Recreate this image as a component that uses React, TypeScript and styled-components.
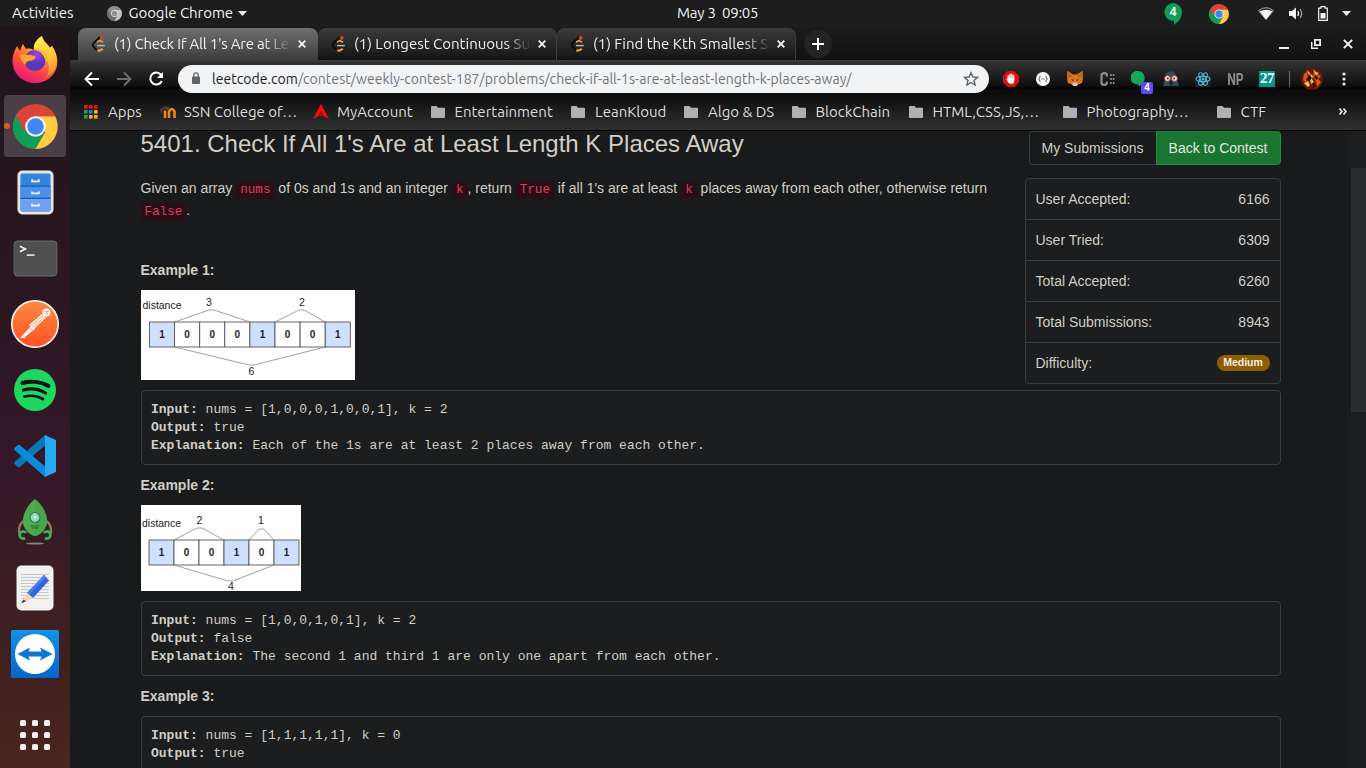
import React from 'react';
import styled, { createGlobalStyle } from 'styled-components';

const ui = `'Ubuntu', 'Noto Sans', sans-serif`;

const GlobalStyle = createGlobalStyle`
  *, *::before, *::after { box-sizing: border-box; }
  html, body { margin: 0; padding: 0; background: #181a1b; overflow: hidden; }
  svg { display: block; flex: none; }
`;

const Desktop = styled.div`
  width: 1366px;
  height: 768px;
  display: flex;
  flex-direction: column;
  overflow: hidden;
  background: #181a1b;
`;

/* ---------- system bar ---------- */

const SystemBar = styled.header`
  flex: none;
  height: 27px;
  display: grid;
  grid-template-columns: 677px auto 1fr;
  align-items: center;
  background: #1d1d1d;
  color: #f2f2f2;
  font: 15px/26px ${ui};
`;

const BarGroup = styled.div<{ $end?: boolean }>`
  display: flex;
  align-items: center;
  justify-content: ${p => (p.$end ? 'flex-end' : 'flex-start')};
  padding: ${p => (p.$end ? '0 10px 0 0' : '0 0 0 12px')};
`;

const BarText = styled.span<{ $track?: number; $before?: number; $gap?: number }>`
  height: 27px;
  letter-spacing: ${p => p.$track ?? 0}px;
  margin-left: ${p => p.$before ?? 0}px;
  margin-right: ${p => p.$gap ?? 0}px;
  white-space: pre;
`;

const StatusSlot = styled.div<{ $w: number }>`
  width: ${p => p.$w}px;
  height: 26px;
  display: flex;
  align-items: center;
  justify-content: center;
`;

/* ---------- dock ---------- */

const Workspace = styled.div`
  flex: 1;
  min-height: 0;
  display: flex;
`;

const Dock = styled.nav`
  flex: none;
  width: 70px;
  display: flex;
  flex-direction: column;
  background: linear-gradient(#20141b 0%, #2b1722 35%, #351829 60%, #40201f 86%, #4a251f 100%);
`;

const DockItem = styled.div<{ $last?: boolean }>`
  position: relative;
  height: 66px;
  display: flex;
  align-items: center;
  justify-content: center;
  ${p => (p.$last ? 'margin-top: auto;' : '')}
  &:first-child { padding-bottom: 2px; }
`;

const ActiveTile = styled.div`
  width: 62px;
  height: 62px;
  border-radius: 4px;
  background: #4b3f46;
  display: flex;
  align-items: center;
  justify-content: center;
`;

const RunningDot = styled.i`
  position: absolute;
  left: 4px;
  top: 30px;
  width: 6px;
  height: 6px;
  border-radius: 50%;
  background: #e95420;
`;

/* ---------- browser chrome ---------- */

const Browser = styled.div`
  flex: 1;
  min-width: 0;
  display: flex;
  flex-direction: column;
`;

const TabStrip = styled.div`
  flex: none;
  height: 33px;
  padding: 1px 0 0 8px;
  display: flex;
  background: linear-gradient(#1b1b1b, #121212);
`;

const Tab = styled.div<{ $active?: boolean }>`
  width: ${p => (p.$active ? 240 : 239)}px;
  height: 32px;
  padding: 0 7px 0 13px;
  display: flex;
  align-items: center;
  border-radius: 8px 8px 0 ${p => (p.$active ? 0 : 8)}px;
  background: ${p => (p.$active ? 'linear-gradient(#6f6f6f, #3c3c3c)' : 'linear-gradient(#3b3b3b, #141414)')};
  border-right: 1px solid ${p => (p.$active ? 'transparent' : '#3d3d3d')};
  color: #f0f0f0;
  font: 15px/32px ${ui};
`;

const TabTitle = styled.span<{ $track: number }>`
  flex: none;
  width: 178px;
  margin-left: 7px;
  white-space: nowrap;
  letter-spacing: ${p => p.$track}px;
  mask-image: linear-gradient(90deg, #000 84%, transparent 100%);
`;

const TabClose = styled.span`
  width: 16px;
  margin-left: 2px;
  display: flex;
  justify-content: center;
`;

const NewTab = styled.div`
  width: 28px;
  height: 28px;
  margin: 2px 0 0 8px;
  border-radius: 50%;
  background: #242424;
  display: flex;
  align-items: center;
  justify-content: center;
`;

const WindowControls = styled.div`
  height: 32px;
  margin-left: auto;
  padding-right: 2px;
  display: flex;
  align-items: center;
`;

const Toolbar = styled.div`
  flex: none;
  height: 37px;
  padding-left: 6px;
  display: flex;
  align-items: center;
  background: linear-gradient(#3d3d3d 0, #303030 3px, #0d0d0d 27px, #000 28px, #0b0b0b 29px, #0f0f0f 37px);
`;

const Slot = styled.div<{ $w?: number }>`
  position: relative;
  flex: none;
  width: ${p => p.$w ?? 32}px;
  height: 28px;
  display: flex;
  align-items: center;
  justify-content: center;
`;

const AddressBar = styled.div`
  width: 811px;
  height: 28px;
  margin: 0 6px;
  padding: 0 10px 0 12px;
  border-radius: 14px;
  display: flex;
  align-items: center;
  background: #f1f3f4;
  color: #70757a;
  font: 14px/28px ${ui};
`;

const Url = styled.span`
  flex: 1;
  margin-left: 10px;
  white-space: nowrap;
  letter-spacing: 0.05px;
  b { font-weight: 400; color: #202124; }
`;

const ExtensionBadge = styled.b`
  position: absolute;
  right: 2px;
  bottom: -1px;
  width: 12px;
  height: 12px;
  border-radius: 2px;
  background: #5a4cf0;
  color: #fff;
  font: bold 10px/12px ${ui};
  text-align: center;
`;

const ExtensionLetters = styled.b`
  color: #8b8b8b;
  font: bold 17px/28px Roboto, sans-serif;
  transform: scaleX(0.72);
`;

const DateBadge = styled.b`
  width: 16px;
  height: 16px;
  background: #009688;
  color: #fff;
  font: bold 15px/14px 'Liberation Serif', serif;
  letter-spacing: -0.5px;
  text-align: center;
`;

const Divider = styled.i`
  width: 1px;
  height: 16px;
  background: #6b6b6b;
`;

const BookmarksBar = styled.div`
  flex: none;
  height: 34px;
  padding: 0 0 4px 14px;
  display: flex;
  align-items: center;
  background: linear-gradient(#0f0f0f, #303030);
  border-bottom: 1px solid #000;
  color: #dcdcdc;
  font: 15px/28px ${ui};
`;

const Bookmark = styled.div<{ $w: number }>`
  flex: none;
  width: ${p => p.$w}px;
  display: flex;
  align-items: center;
  white-space: nowrap;
  > span { width: 24px; flex: none; }
`;

/* ---------- page ---------- */

const Viewport = styled.main`
  flex: 1;
  min-height: 0;
  display: flex;
  overflow: hidden;
  background: #181a1b;
`;

const Article = styled.div`
  flex: 1;
  padding-left: 70.5px;
  color: #d2cec6;
  font: 14px/22px 'Liberation Sans', Arial, sans-serif;
`;

const Column = styled.div`
  width: 1140px;
`;

const ScrollTrack = styled.div`
  width: 15px;
  padding-top: 37px;
  background: #1c1e1f;
`;

const ScrollThumb = styled.div`
  height: 244px;
  background: #2a2c2e;
`;

const Sidebar = styled.aside`
  float: right;
  width: 256px;
  margin-left: 20px;
`;

const ButtonGroup = styled.div`
  display: flex;
  justify-content: flex-end;
  margin-bottom: 13px;
`;

const PageButton = styled.button<{ $primary?: boolean }>`
  height: 34px;
  width: ${p => (p.$primary ? 125 : 127)}px;
  padding: 0;
  border: 1px solid ${p => (p.$primary ? '#1c8f36' : '#3c4042')};
  ${p => (p.$primary ? '' : 'border-right: 0;')}
  border-radius: ${p => (p.$primary ? '0 4px 4px 0' : '4px 0 0 4px')};
  background: ${p => (p.$primary ? '#197530' : '#181a1b')};
  color: ${p => (p.$primary ? '#e8e6e3' : '#d2cec6')};
  font: 14px/20px 'Liberation Sans', Arial, sans-serif;
`;

const StatList = styled.dl`
  margin: 0;
  border: 1px solid #3a3d3f;
  border-radius: 4px;
  background: #1b1d1e;
`;

const StatRow = styled.div`
  height: 41px;
  padding: 0 10px;
  display: flex;
  align-items: center;
  justify-content: space-between;
  & + & { border-top: 1px solid #3a3d3f; }
  &:first-child { height: 40px; }
  dd { margin: 0; }
`;

const Pill = styled.span`
  display: block;
  width: 53px;
  height: 16px;
  border-radius: 8px;
  background: #8f5e00;
  color: #f1efec;
  font: bold 10.5px/15px 'Liberation Sans', Arial, sans-serif;
  text-align: center;
`;

const Title = styled.h3`
  margin: 0 0 20px;
  font-size: 24px;
  line-height: 26px;
  font-weight: 400;
`;

const Paragraph = styled.p<{ $after: number }>`
  margin: 0 0 ${p => p.$after}px;
`;

const Code = styled.code`
  padding: 2px 4px;
  border-radius: 4px;
  background: #2b0e15;
  color: #dc3f66;
  font: 12.6px 'Liberation Mono', monospace;
`;

const Sample = styled.pre`
  clear: both;
  height: 75px;
  margin: 0 0 9px;
  padding: 9.5px;
  border: 1px solid #3a3d3f;
  border-radius: 4px;
  background: #1b1d1e;
  font: 13px/18px 'Liberation Mono', monospace;
`;

const Figure = styled.div<{ $after: number }>`
  margin-bottom: ${p => p.$after}px;
`;

/* ---------- icons ---------- */

const ChromeLogo = ({ size, gray }: { size: number; gray?: boolean }) => {
  const [r, g, y, b, w] = gray
    ? ['#8c8c8c', '#6d6d6d', '#c4c4c4', '#8f8f8f', '#e6e6e6']
    : ['#db4437', '#0f9d58', '#ffcd40', '#4285f4', '#f1f1f1'];
  return (
    <svg width={size} height={size} viewBox="0 0 48 48">
      <circle cx="24" cy="24" r="24" fill={r} />
      <path d="M3.2 12 A24 24 0 0 0 24 48 L34.4 29 L24 24 L13.6 30Z" fill={g} />
      <path d="M44.8 13 H24 L34.4 30 L24 48 A24 24 0 0 0 44.8 13Z" fill={y} />
      <path d="M3.2 12 A24 24 0 0 1 44.8 13 H24 L13.6 30Z" fill={r} />
      <circle cx="24" cy="24" r="11" fill={w} />
      <circle cx="24" cy="24" r="8.8" fill={b} />
    </svg>
  );
};

const Firefox = () => (
  <svg width="46" height="47" viewBox="0 0 46 47">
    <defs>
      <linearGradient id="ffBody" x1="0.8" y1="0" x2="0.3" y2="1">
        <stop offset="0" stopColor="#fff44f" />
        <stop offset="0.35" stopColor="#ffa22b" />
        <stop offset="0.65" stopColor="#ff4a40" />
        <stop offset="1" stopColor="#e5127d" />
      </linearGradient>
      <linearGradient id="ffTail" x1="0.3" y1="0" x2="0.6" y2="1">
        <stop offset="0" stopColor="#fff04a" />
        <stop offset="0.6" stopColor="#ffc533" />
        <stop offset="1" stopColor="#ff8a35" />
      </linearGradient>
      <radialGradient id="ffGlobe" cx="0.6" cy="0.2">
        <stop offset="0" stopColor="#a045e0" />
        <stop offset="1" stopColor="#5438b8" />
      </radialGradient>
    </defs>
    <path d="M23 47C10 47 0.5 37 0.5 25C0.5 18 4 12 5 10L8 15C9 12 10 9 11 8L14 13C17 12 20 13 22 14C21 8 25 3 30 0C31 6 36 8 38 12L40 10C45 17 46 24 45 30C43 40 34 47 23 47Z" fill="url(#ffBody)" />
    <path d="M22 14C21 8 25 3 30 0C31 6 36 8 38 12L40 10C46 19 47 33 35 41C38 34 37 22 32 19C29 16 24 16 22 14Z" fill="url(#ffTail)" />
    <circle cx="23" cy="24.5" r="10.5" fill="url(#ffGlobe)" />
    <path d="M7 18C11 19 18 18 23 20C25 22 21 25 17 25C15 25 14 27 13 29C10 26 8 22 7 18Z" fill="#ffa12a" />
    <path d="M22 14C28 14 32 19 34 26L37 24C36 18 32 14 22 12Z" fill="#ffbb2e" />
  </svg>
);

const Files = () => (
  <svg width="37" height="45" viewBox="0 0 38 46">
    <rect x="0.5" y="0.5" width="37" height="45" rx="5" fill="#ece5dc" />
    <rect x="3.5" y="3.5" width="31" height="39" rx="2" fill="#3584dc" />
    <rect x="3.5" y="16.5" width="31" height="12" fill="#4b91e8" />
    <rect x="3.5" y="29.5" width="31" height="13" rx="2" fill="#6fa1f2" />
    <path d="M3.5 16.5H34.5M3.5 29H34.5" stroke="#1e5bb0" strokeWidth="1.2" />
    <path d="M15.5 9.5v2h7v-2M15.5 22v2h7v-2M15.5 34.5v2h7v-2" stroke="#f3efe8" strokeWidth="1.8" fill="none" />
  </svg>
);

const Terminal = () => (
  <svg width="45" height="37" viewBox="0 0 46 38">
    <rect x="1" y="1" width="44" height="36" rx="3.5" fill="#505050" stroke="#6a6a6a" />
    <path d="M7 6.5L12.500 9.200L7 12" stroke="#eee" strokeWidth="1.8" fill="none" />
    <path d="M14 15.500H22" stroke="#eee" strokeWidth="1.6" />
  </svg>
);

const Postman = () => (
  <svg width="48" height="48" viewBox="0 0 48 48">
    <defs>
      <linearGradient id="pm" x1="0" y1="0" x2="0" y2="1">
        <stop offset="0" stopColor="#ff8a3d" />
        <stop offset="1" stopColor="#ff5226" />
      </linearGradient>
    </defs>
    <circle cx="24" cy="24" r="23.2" fill="url(#pm)" stroke="#fff" strokeWidth="1.6" />
    <circle cx="35.5" cy="12.5" r="4" fill="#fff" />
    <path d="M31 14L18 25L23 29L35 17.500ZM20 26L11 36L12.500 38L24 29Z" fill="#fff" />
    <path d="M19.500 26L32 15.500M21.500 27.500L33.500 17M17 27L22 30.500" stroke="#ff7238" strokeWidth="0.8" />
    <path d="M33.500 12L38 11M35 12L37 15" stroke="#ff7238" strokeWidth="0.8" />
    <path d="M14 35L10.500 37.500H14" stroke="#fff" strokeWidth="1.2" fill="none" />
  </svg>
);

const Spotify = () => (
  <svg width="42" height="42" viewBox="0 0 42 42">
    <circle cx="21" cy="21" r="21" fill="#1ed760" />
    <g stroke="#191414" fill="none" strokeLinecap="round">
      <path d="M8.500 14C16 11.500 27 12.500 34.500 17" strokeWidth="4" />
      <path d="M9.500 21C17 19 25 20 31.500 24" strokeWidth="3.2" />
      <path d="M10.500 27.500C17 26 23 26.500 29 30" strokeWidth="2.7" />
    </g>
  </svg>
);

const VSCode = () => (
  <svg width="42" height="42" viewBox="0 0 42 42">
    <path d="M31 0L0.500 27Q0 28 0.500 29L3.500 31.800Q5 32.500 6 31.800L31 10.500Z" fill="#0878ba" />
    <path d="M31 42L0.500 15Q0 14 0.500 13L3.500 10.200Q5 9.500 6 10.200L31 31.500Z" fill="#0a8ad8" />
    <path d="M31 0L42 5V37L31 42Z" fill="#25a8f2" />
  </svg>
);

const Rocket = () => (
  <svg width="36" height="46" viewBox="0 0 36 46">
    <ellipse cx="18" cy="44.5" rx="9" ry="1" fill="#8a7c84" />
    <path d="M6 22C2 26 1 32 3 35M30 22C34 26 35 32 33 35" stroke="#8f7d5c" strokeWidth="2.4" fill="none" />
    <path d="M18 0C11 5 5 16 6 24C7 31 14 37 18 37C22 37 29 31 30 24C31 16 25 5 18 0Z" fill="#4dac50" />
    <path d="M18 0V37C22 37 29 31 30 24C31 16 25 5 18 0Z" fill="#3f9746" opacity="0.35" />
    <circle cx="18" cy="18.5" r="5.5" fill="#277f58" />
    <circle cx="18" cy="18.5" r="4.4" fill="#8ed9bb" />
    <circle cx="18" cy="18" r="1.5" fill="#e6fff6" />
    <path d="M14 27h8M15 29h6" stroke="#276b34" strokeWidth="1.4" strokeDasharray="1.500 0.700" />
    <path d="M9 34A3.500 3.500 0 1 0 8 39M27 34A3.500 3.500 0 1 1 28 39" stroke="#36b35b" strokeWidth="2.8" fill="none" />
  </svg>
);

const Editor = () => (
  <svg width="38" height="46" viewBox="0 0 38 46">
    <rect x="0.5" y="0.5" width="37" height="45" rx="5" fill="#f1f1f1" />
    <path d="M5 9.5h28M5 12.5h28M5 15.5h28M5 18.5h28M5 21.5h28M5 24.5h28M5 27.5h28M5 30.5h28M5 33.5h28" stroke="#c9c9c9" />
    <path d="M28 10L33 15.500L17 33L11 28Z" fill="#3264dc" />
    <path d="M28 10L30 12.200L13 29.700L11 28Z" fill="#4d83f0" />
    <path d="M11 28L17 33L6 38Z" fill="#f6d5b5" />
    <path d="M7.500 34.500L10 36.200L5 38.500Z" fill="#3b3b3b" />
  </svg>
);

const TeamViewer = () => (
  <svg width="48" height="48" viewBox="0 0 48 48">
    <defs>
      <linearGradient id="tv" x1="0" y1="0" x2="0" y2="1">
        <stop offset="0" stopColor="#1292e8" />
        <stop offset="1" stopColor="#0565cc" />
      </linearGradient>
    </defs>
    <rect width="48" height="48" rx="2" fill="url(#tv)" />
    <circle cx="24" cy="24" r="20" fill="#fff" />
    <path d="M6.500 24L19 17.500L17.500 21.500H30.500L29 17.500L41.500 24L29 30.500L30.500 26.500H17.500L19 30.500Z" fill="#0e75d3" />
  </svg>
);

const AppsGrid = () => (
  <svg width="30" height="30" viewBox="0 0 30 30" fill="#f2f0ee">
    {[0, 12, 24].map(y => [0, 12, 24].map(x => <rect key={`${x}-${y}`} x={x} y={y} width="6" height="6" rx="1.5" />))}
  </svg>
);

const LeetFavicon = () => (
  <svg width="16" height="16" viewBox="0 0 16 16" fill="none">
    <path d="M5.800 6.200Q9 3.500 12 6.300" stroke="#f0a514" strokeWidth="1.8" />
    <path d="M5 13.500Q8.500 16 11.800 12.800" stroke="#f0a514" strokeWidth="2" />
    <path d="M9 1L2.200 7.500Q1.200 9 2.200 10.500L6 14.500" stroke="#0b0b0b" strokeWidth="1.9" />
    <path d="M6 9.600H13.800" stroke="#b5b5b5" strokeWidth="1.5" />
    <circle cx="10.700" cy="2" r="1.9" fill="#d4403a" />
  </svg>
);

const Cross = ({ size = 8, w = 1.8 }: { size?: number; w?: number }) => (
  <svg width={size} height={size} viewBox="0 0 8 8">
    <path d="M0.700 0.700L7.300 7.300M7.300 0.700L0.700 7.300" stroke="#f2f2f2" strokeWidth={w} />
  </svg>
);

const Arrow = ({ forward }: { forward?: boolean }) => (
  <svg width="16" height="16" viewBox="0 0 16 16" fill="none" stroke={forward ? '#6f6f6f' : '#fff'} strokeWidth="1.9">
    <path d={forward ? 'M1 8H14M8 1.500L14.500 8L8 14.500' : 'M15 8H2M8 1.500L1.500 8L8 14.500'} />
  </svg>
);

const Folder = () => (
  <svg width="14" height="12" viewBox="0 0 14 12">
    <path d="M1 0H5.500L7 1.800H13Q14 1.800 14 2.800V11Q14 12 13 12H1Q0 12 0 11V1Q0 0 1 0Z" fill="#aeb0b3" />
  </svg>
);

const AppsMark = () => {
  const colors = ['#f01414', '#f01414', '#f01414', '#21a453', '#3273e8', '#f2b212', '#21a453', '#f2b212', '#f2b212'];
  return (
    <svg width="14" height="14" viewBox="0 0 14 14">
      {colors.map((c, i) => (
        <rect key={i} x={(i % 3) * 5} y={Math.floor(i / 3) * 5} width="3.6" height="3.6" fill={c} />
      ))}
    </svg>
  );
};

const Moodle = () => (
  <svg width="17" height="12" viewBox="0 0 17 12">
    <path d="M5 12V4.500M9 12V5.500Q12 0.500 14.500 5.500V12" stroke="#f08a0c" strokeWidth="2.6" fill="none" />
    <path d="M0 3L5 0.500L10 1L8 4Q4 2.500 2 4.500L1.500 8H0.800Z" fill="#4d4035" />
  </svg>
);

const RedMark = () => (
  <svg width="16" height="15" viewBox="0 0 16 15">
    <path d="M8 0L16 15L10.500 12.200L8 7L5.500 12.200L0 15Z" fill="#fa0a0a" />
    <path d="M6.500 9.500H9.500V12H6.500Z" fill="#d00" />
  </svg>
);

interface DiagramProps {
  width: number;
  height: number;
  cells: number[];
  top: number;
  x0: number;
  step: number;
  label: [number, number];
  arcs: { from: number; to: number; tip: [number, number]; text: string; tx: number; ty: number; below?: boolean }[];
}

const Diagram = ({ width, height, cells, top, x0, step, label, arcs }: DiagramProps) => (
  <svg width={width} height={height} viewBox={`0 0 ${width} ${height}`} fontFamily="Liberation Sans, Arial, sans-serif" fontSize="10.5" fill="#222">
    <rect width={width} height={height} fill="#fff" />
    <text x={label[0]} y={label[1]} textLength="39">distance</text>
    {cells.map((v, i) => (
      <g key={i}>
        <rect x={x0 + i * step} y={top} width={step} height="25" fill={v ? '#cfdfff' : '#fff'} stroke="#555" strokeWidth="0.9" />
        <text x={x0 + (i + 0.5) * step} y={top + 16} textAnchor="middle" fontWeight="bold" fontSize="10">{v}</text>
      </g>
    ))}
    {arcs.map((a, i) => {
      const y = a.below ? top + 25 : top;
      return (
        <g key={i}>
          <path d={`M${x0 + a.from * step} ${y}L${a.tip[0] - 3} ${a.tip[1]}H${a.tip[0] + 2}L${x0 + a.to * step} ${y}`} fill="none" stroke="#888" strokeWidth="0.8" strokeLinejoin="round" />
          <text x={a.tx} y={a.ty} textAnchor="middle">{a.text}</text>
        </g>
      );
    })}
  </svg>
);

/* ---------- data ---------- */

const tabs = [
  { title: "(1) Check If All 1's Are at Le", active: true, track: -0.22 },
  { title: '(1) Longest Continuous Su', track: 0 },
  { title: '(1) Find the Kth Smallest S', track: 0 },
];

const bookmarks = [
  { text: 'Apps', w: 76, icon: <AppsMark /> },
  { text: 'SSN College of…', w: 153, icon: <Moodle /> },
  { text: 'MyAccount', w: 117.5, icon: <RedMark /> },
  { text: 'Entertainment', w: 140.5, icon: <Folder /> },
  { text: 'LeanKloud', w: 113, icon: <Folder /> },
  { text: 'Algo & DS', w: 107.5, icon: <Folder /> },
  { text: 'BlockChain', w: 117, icon: <Folder /> },
  { text: 'HTML,CSS,JS,…', w: 154, icon: <Folder /> },
  { text: 'Photography…', w: 154, icon: <Folder /> },
  { text: 'CTF', w: 101, icon: <Folder /> },
];

const stats = [
  ['User Accepted:', '6166'],
  ['User Tried:', '6309'],
  ['Total Accepted:', '6260'],
  ['Total Submissions:', '8943'],
];

const dock = [Files, Terminal, Postman, Spotify, VSCode, Rocket, Editor, TeamViewer];

export default function App() {
  return (
    <Desktop>
      <GlobalStyle />
      <SystemBar>
        <BarGroup>
          <BarText $gap={33}>Activities</BarText>
          <ChromeLogo size={15} gray />
          <BarText $before={7} $gap={5} $track={-0.05}>Google Chrome</BarText>
          <svg width="9" height="5" viewBox="0 0 9 5"><path d="M0 0H9L4.500 5Z" fill="#f2f2f2" /></svg>
        </BarGroup>
        <BarText $track={-0.25}>May 3  09:05</BarText>
        <BarGroup $end>
          <StatusSlot $w={30}>
            <svg width="18" height="22" viewBox="0 0 18 22">
              <path d="M9 0A9 9 0 0 1 18 9C18 15 14 19 10 22V18A9 9 0 1 1 9 0Z" fill="#109d58" />
              <text x="9" y="13" textAnchor="middle" fill="#fff" fontFamily="Liberation Sans, sans-serif" fontWeight="bold" fontSize="12">4</text>
            </svg>
          </StatusSlot>
          <StatusSlot $w={62}><ChromeLogo size={20} /></StatusSlot>
          <StatusSlot $w={32}>
            <svg width="16" height="13" viewBox="0 0 16 13">
              <path d="M0.500 3.500Q8 -2 15.500 3.500L8 12.500Z" fill="none" stroke="#aaa" />
              <path d="M1.500 4.300Q8 1 14.500 4.300L8 12.500Z" fill="#f2f2f2" />
            </svg>
          </StatusSlot>
          <StatusSlot $w={28}>
            <svg width="15" height="13" viewBox="0 0 15 13" fill="none" stroke="#f2f2f2" strokeWidth="1.2">
              <path d="M0 4H3L7 0.500V12.500L3 9H0Z" fill="#f2f2f2" stroke="none" />
              <path d="M8.800 4Q10.500 6.500 8.800 9" />
              <path d="M11 2Q14.500 6.500 11 11" stroke="#aaa" />
            </svg>
          </StatusSlot>
          <StatusSlot $w={26}>
            <svg width="10" height="15" viewBox="0 0 10 15">
              <path d="M0.700 2.200H3V0.700H7V2.200H9.300V14.300H0.700Z" fill="none" stroke="#f2f2f2" strokeWidth="1.2" />
              <path d="M2.500 7H7.500V12.500H2.500Z" fill="#f2f2f2" />
            </svg>
          </StatusSlot>
          <StatusSlot $w={20}>
            <svg width="9" height="5" viewBox="0 0 9 5"><path d="M0 0H9L4.500 5Z" fill="#f2f2f2" /></svg>
          </StatusSlot>
        </BarGroup>
      </SystemBar>

      <Workspace>
        <Dock>
          <DockItem><Firefox /></DockItem>
          <DockItem>
            <RunningDot />
            <ActiveTile><ChromeLogo size={45} /></ActiveTile>
          </DockItem>
          {dock.map((Icon, i) => <DockItem key={i}><Icon /></DockItem>)}
          <DockItem $last><AppsGrid /></DockItem>
        </Dock>

        <Browser>
          <TabStrip>
            {tabs.map(t => (
              <Tab key={t.title} $active={t.active}>
                <LeetFavicon />
                <TabTitle $track={t.track}>{t.title}</TabTitle>
                <TabClose><Cross /></TabClose>
              </Tab>
            ))}
            <NewTab>
              <svg width="12" height="12" viewBox="0 0 12 12"><path d="M6 0V12M0 6H12" stroke="#fff" strokeWidth="2" /></svg>
            </NewTab>
            <WindowControls>
              <Slot><svg width="10" height="10"><path d="M0 9H10" stroke="#eee" strokeWidth="2" /></svg></Slot>
              <Slot>
                <svg width="10" height="10" viewBox="0 0 10 10" fill="none" stroke="#eee">
                  <path d="M3.900 0.900H9.100V6.100H3.900Z" strokeWidth="1.8" />
                  <path d="M0.700 3V9.300H7" strokeWidth="1.5" />
                </svg>
              </Slot>
              <Slot><Cross size={10} w={1.6} /></Slot>
            </WindowControls>
          </TabStrip>

          <Toolbar>
            <Slot><Arrow /></Slot>
            <Slot><Arrow forward /></Slot>
            <Slot>
              <svg width="16" height="16" viewBox="0 0 16 16">
                <path d="M13 3.800A6 6 0 1 0 13.800 10" fill="none" stroke="#fff" strokeWidth="2" />
                <path d="M15 1V7H9Z" fill="#fff" />
              </svg>
            </Slot>
            <AddressBar>
              <svg width="12" height="13" viewBox="0 0 12 13">
                <rect x="2" y="4.5" width="8" height="7.5" rx="1" fill="#5f6368" />
                <path d="M3.700 5V3.200a2.300 2.300 0 0 1 4.600 0V5" fill="none" stroke="#5f6368" strokeWidth="1.3" />
              </svg>
              <Url><b>leetcode.com</b>/contest/weekly-contest-187/problems/check-if-all-1s-are-at-least-length-k-places-away/</Url>
              <svg width="16" height="16" viewBox="0 0 16 16">
                <path d="M8 1.700L9.900 6L14.500 6.400L11 9.400L12.100 14L8 11.500L3.900 14L5 9.400L1.500 6.400L6.100 6Z" fill="none" stroke="#5f6368" strokeWidth="1.4" />
              </svg>
            </AddressBar>
            <Slot>
              <svg width="16" height="16" viewBox="0 0 16 16">
                <path d="M4.700 0H11.300L16 4.700V11.300L11.300 16H4.700L0 11.300V4.700Z" fill="#e40d0d" />
                <path d="M5.200 8V5M7 8V3.500M8.800 8V3.200M10.600 8V4.500" stroke="#fff" strokeWidth="1.4" strokeLinecap="round" />
                <path d="M4.500 7H11.300V10Q11 13 8.500 13Q6 13 4.500 10.500L3.500 8.500Z" fill="#fff" />
              </svg>
            </Slot>
            <Slot>
              <svg width="14" height="14" viewBox="0 0 14 14">
                <circle cx="7" cy="7" r="7" fill="#fff" />
                <path d="M4.500 4Q3.500 4 3.600 5.800L2.700 7L3.600 8.200Q3.500 10 4.500 10M9.500 4Q10.500 4 10.400 5.800L11.300 7L10.400 8.200Q10.500 10 9.500 10" stroke="#333" strokeWidth="0.9" fill="none" />
                <path d="M5.300 7H8.700" stroke="#333" strokeDasharray="0.900 0.500" />
              </svg>
            </Slot>
            <Slot>
              <svg width="16" height="15" viewBox="0 0 16 15">
                <path d="M0.500 0L6 3.500H10L15.500 0L16 7L15 12L11 13.500L9.500 15H6.500L5 13.500L1 12L0 7Z" fill="#e2761b" />
                <path d="M0.500 0L6 3.500L4 7L0 7ZM15.500 0L10 3.500L12 7H16Z" fill="#c4691a" />
                <path d="M5 13.500L6.500 11.500H9.500L11 13.500L9.500 15H6.500Z" fill="#d7c1b3" />
                <path d="M4.500 8.500L6.500 9.500M11.500 8.500L9.500 9.500" stroke="#233447" strokeWidth="1.3" />
              </svg>
            </Slot>
            <Slot>
              <svg width="15" height="14" viewBox="0 0 15 14">
                <path d="M6.800 4.500V3Q6.800 1.100 4.200 1.100Q1.500 1.100 1.500 3.500V10.500Q1.500 12.900 4.200 12.900Q6.800 12.900 6.800 11V9.500" fill="none" stroke="#8f8f8f" strokeWidth="2.2" />
                <path d="M10.200 3h1.600M12.800 3h1.600M10.200 7h1.600M12.800 7h1.600M10.200 11h1.600M12.800 11h1.600" stroke="#8f8f8f" strokeWidth="2.2" />
              </svg>
            </Slot>
            <Slot>
              <svg width="16" height="16" viewBox="0 0 16 16"><path d="M7 0a6.700 6.700 0 0 1 6.700 6.700C13.700 11 10 14 7.700 15.500V13.200A6.700 6.700 0 1 1 7 0Z" fill="#12a85c" /></svg>
              <ExtensionBadge>4</ExtensionBadge>
            </Slot>
            <Slot>
              <svg width="16" height="15" viewBox="0 0 16 15">
                <path d="M2 8Q2 0 6 1L8 0Q14 2 14 8L16 15H0Z" fill="#2b4d5c" />
                <circle cx="4.500" cy="7.500" r="2.8" fill="#f3e7dd" stroke="#c5533a" /><circle cx="11.500" cy="7.500" r="2.8" fill="#f3e7dd" stroke="#c5533a" />
                <circle cx="4.800" cy="7.500" r="1" fill="#333" /><circle cx="11.200" cy="7.500" r="1" fill="#333" />
                <path d="M6 12L8 9L10 12L8 15Z" fill="#14222b" />
              </svg>
            </Slot>
            <Slot>
              <svg width="16" height="16" viewBox="0 0 16 16" fill="none" stroke="#53b9dd" strokeWidth="1.1">
                <rect width="16" height="16" fill="#1c1f24" stroke="none" />
                <ellipse cx="8" cy="8" rx="7" ry="2.700" />
                <ellipse cx="8" cy="8" rx="7" ry="2.700" transform="rotate(60 8 8)" />
                <ellipse cx="8" cy="8" rx="7" ry="2.700" transform="rotate(120 8 8)" />
                <circle cx="8" cy="8" r="1" fill="#53b9dd" />
              </svg>
            </Slot>
            <Slot><ExtensionLetters>NP</ExtensionLetters></Slot>
            <Slot><DateBadge>27</DateBadge></Slot>
            <Slot $w={13}><Divider /></Slot>
            <Slot>
              <svg width="22" height="22" viewBox="0 0 22 22">
                <circle cx="11" cy="11" r="11" fill="#6b1607" />
                <path d="M3 6L7 3L6 8L10 5L9 11L4 14L2 12ZM13 2L16 6L20 8L17 11L20 14L16 19L15 13L12 10Z" fill="#d85a16" />
                <path d="M6 2L9 5L8 7ZM12 1L15 4L18 5L15 7ZM3 15L7 13L9 17L7 19Z" fill="#ffc75a" />
                <path d="M10 6L12 8L11 11L13 14L10 16L9 12Z" fill="#ffb23e" />
                <path d="M8 7L11 10L8 13L5 12ZM14 7L17 9L16 12L13 10ZM12 15L15 17L12 20Z" fill="#240702" />
              </svg>
            </Slot>
            <Slot>
              <svg width="4" height="14" viewBox="0 0 4 14" fill="#eee"><circle cx="2" cy="2" r="1.6" /><circle cx="2" cy="7" r="1.6" /><circle cx="2" cy="12" r="1.6" /></svg>
            </Slot>
          </Toolbar>

          <BookmarksBar>
            {bookmarks.map(b => (
              <Bookmark key={b.text} $w={b.w}><span>{b.icon}</span>{b.text}</Bookmark>
            ))}
            <Slot $w={50}>
              <svg width="8" height="7" viewBox="0 0 8 7" fill="none" stroke="#eee" strokeWidth="1.6"><path d="M0.500 0.500L3 3.500L0.500 6.500M4.500 0.500L7 3.500L4.500 6.500" /></svg>
            </Slot>
          </BookmarksBar>

          <Viewport>
            <Article>
              <Column>
                <Sidebar>
                  <ButtonGroup>
                    <PageButton>My Submissions</PageButton>
                    <PageButton $primary>Back to Contest</PageButton>
                  </ButtonGroup>
                  <StatList>
                    {stats.map(([k, v]) => <StatRow key={k}><dt>{k}</dt><dd>{v}</dd></StatRow>)}
                    <StatRow><dt>Difficulty:</dt><dd><Pill>Medium</Pill></dd></StatRow>
                  </StatList>
                </Sidebar>
                <Title>5401. Check If All 1's Are at Least Length K Places Away</Title>
                <Paragraph $after={38}>
                  Given an array <Code>nums</Code> of 0s and 1s and an integer <Code>k</Code>, return <Code>True</Code> if all 1's are at least <Code>k</Code> places away from each other, otherwise return <Code>False</Code>.
                </Paragraph>
                <Paragraph $after={9}><b>Example 1:</b></Paragraph>
                <Figure $after={10}>
                  <Diagram
                    width={214} height={90} cells={[1, 0, 0, 0, 1, 0, 0, 1]} top={32} x0={8.5} step={25.1} label={[1.5, 19]}
                    arcs={[
                      { from: 1, to: 4, tip: [71, 20], text: '3', tx: 68, ty: 15.5 },
                      { from: 5, to: 7, tip: [161, 20], text: '2', tx: 161, ty: 15.5 },
                      { from: 1, to: 7, tip: [111, 75], text: '6', tx: 110.5, ty: 85, below: true },
                    ]}
                  />
                </Figure>
                <Sample><b>Input:</b> nums = [1,0,0,0,1,0,0,1], k = 2{'\n'}<b>Output:</b> true{'\n'}<b>Explanation:</b> Each of the 1s are at least 2 places away from each other.</Sample>
                <Paragraph $after={9}><b>Example 2:</b></Paragraph>
                <Figure $after={10}>
                  <Diagram
                    width={160} height={86} cells={[1, 0, 0, 1, 0, 1]} top={35} x0={8} step={25} label={[1, 22]}
                    arcs={[
                      { from: 1, to: 3, tip: [59, 23], text: '2', tx: 58.5, ty: 19 },
                      { from: 4, to: 5, tip: [121, 24], text: '1', tx: 120, ty: 19 },
                      { from: 1, to: 5, tip: [90, 76], text: '4', tx: 90, ty: 85, below: true },
                    ]}
                  />
                </Figure>
                <Sample><b>Input:</b> nums = [1,0,0,1,0,1], k = 2{'\n'}<b>Output:</b> false{'\n'}<b>Explanation:</b> The second 1 and third 1 are only one apart from each other.</Sample>
                <Paragraph $after={9}><b>Example 3:</b></Paragraph>
                <Sample><b>Input:</b> nums = [1,1,1,1,1], k = 0{'\n'}<b>Output:</b> true</Sample>
              </Column>
            </Article>
            <ScrollTrack><ScrollThumb /></ScrollTrack>
          </Viewport>
        </Browser>
      </Workspace>
    </Desktop>
  );
}
